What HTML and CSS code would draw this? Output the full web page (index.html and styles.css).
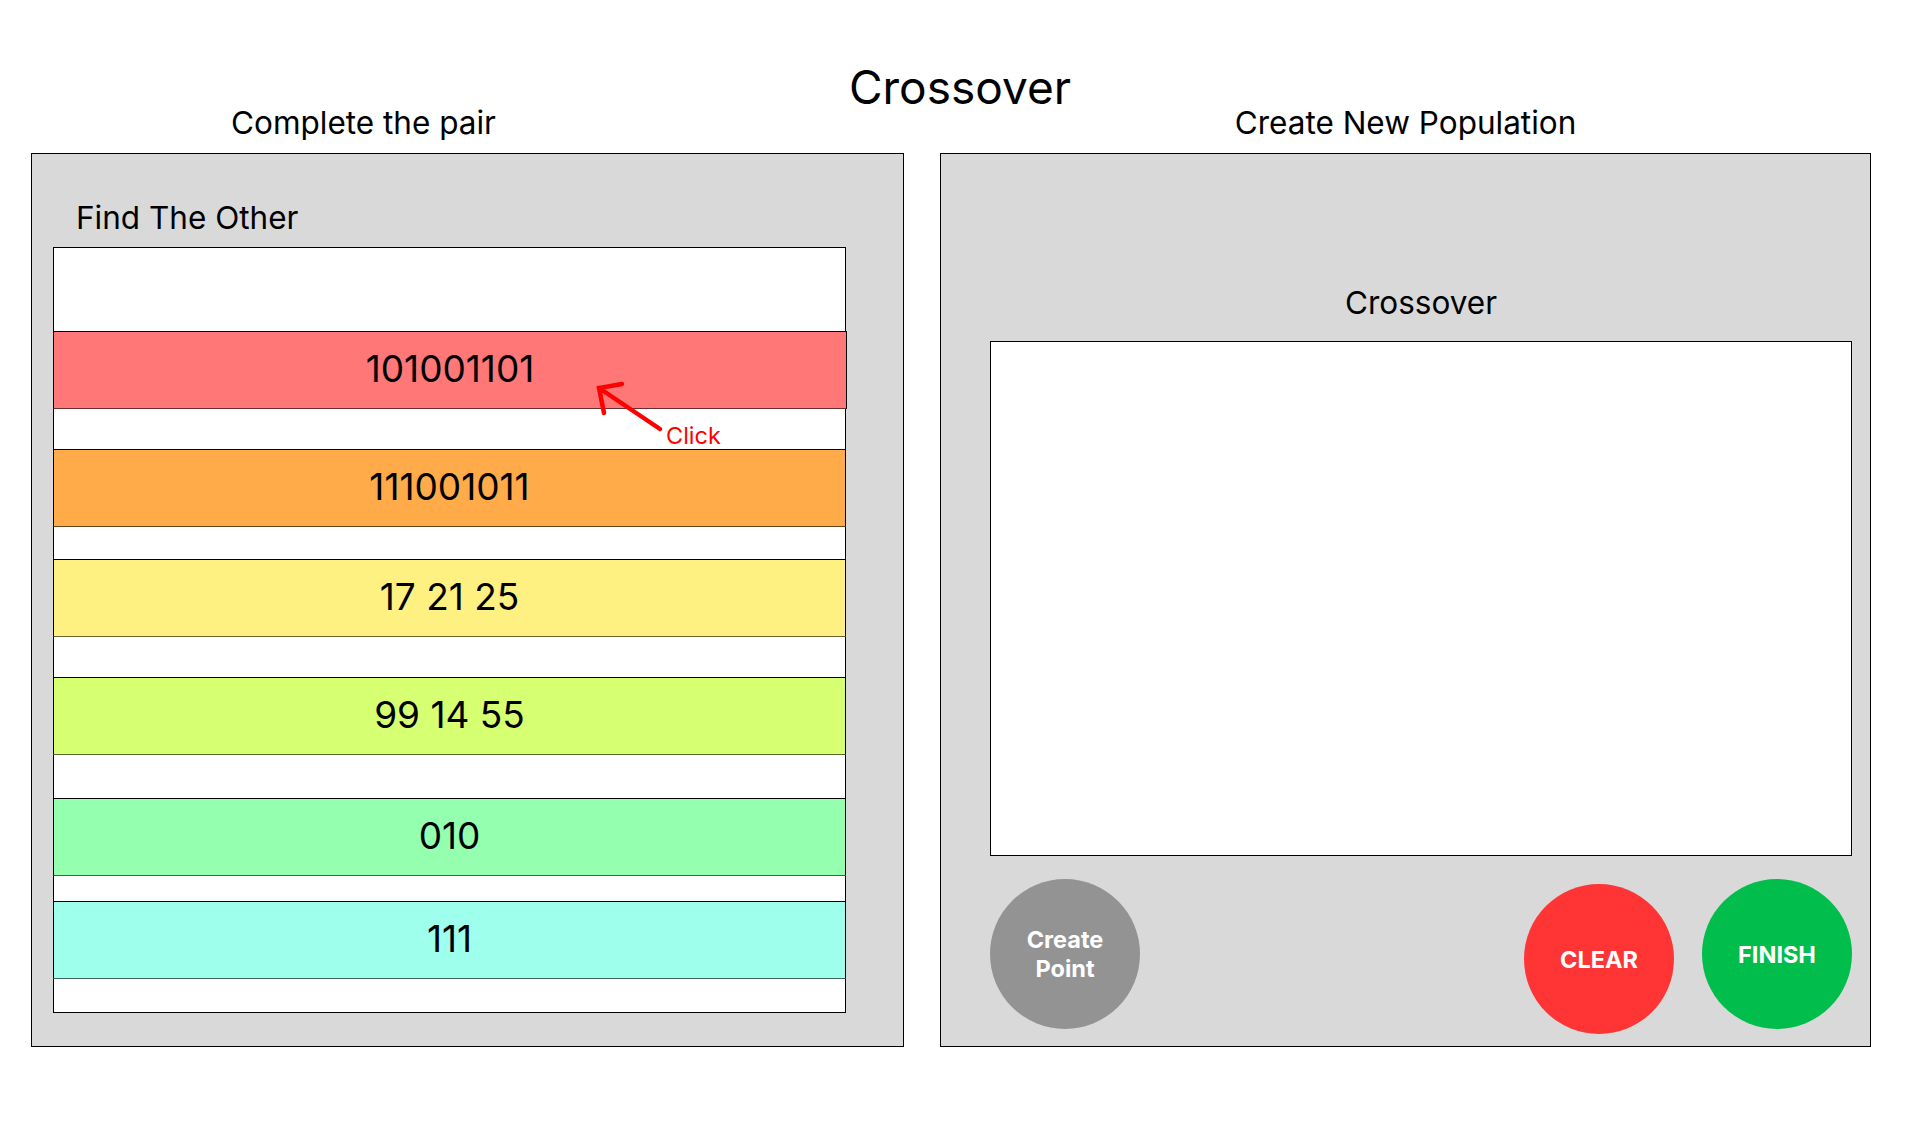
FILE: index.html
```html
<!DOCTYPE html>
<html lang="en">
<head>
<meta charset="utf-8">
<title>Crossover</title>
<link rel="stylesheet" href="styles.css">
</head>
<body>
<main class="page">
  <h1 class="page-title">Crossover</h1>
  <div class="columns">
    <section class="column">
      <h2 class="column-title column-title--left">Complete the pair</h2>
      <div class="panel panel--pairs">
        <h3 class="panel-heading">Find The Other</h3>
        <div class="list">
          <div class="row row--red"><span>101001101</span></div>
          <div class="row row--orange"><span>111001011</span></div>
          <div class="row row--yellow"><span>17 21 25</span></div>
          <div class="row row--lime"><span>99 14 55</span></div>
          <div class="row row--green"><span>010</span></div>
          <div class="row row--cyan"><span>111</span></div>
          <svg class="hint-arrow" width="80" height="57" viewBox="0 0 80 57" aria-hidden="true">
            <path d="M69 51 L8 10 M31 6 L8 10 L13 35" fill="none" stroke="#ff0000" stroke-width="4.5" stroke-linecap="round" stroke-linejoin="miter"/>
          </svg>
          <span class="hint-label">Click</span>
        </div>
      </div>
    </section>
    <section class="column">
      <h2 class="column-title column-title--center">Create New Population</h2>
      <div class="panel panel--create">
        <h3 class="panel-heading panel-heading--center">Crossover</h3>
        <div class="canvas"></div>
        <div class="actions">
          <button class="circle-btn circle-btn--gray" type="button">Create<br>Point</button>
          <div class="actions-right">
            <button class="circle-btn circle-btn--red" type="button">CLEAR</button>
            <button class="circle-btn circle-btn--green" type="button">FINISH</button>
          </div>
        </div>
      </div>
    </section>
  </div>
</main>
</body>
</html>
```

FILE: styles.css
```css
* { box-sizing: border-box; }
html, body { margin: 0; padding: 0; background: #ffffff; }
body {
  font-family: Inter, "Noto Sans", "Liberation Sans", sans-serif;
  color: #000;
  width: 1920px;
  height: 1134px;
  overflow: hidden;
}
.page { padding-top: 67px; }
.page-title {
  margin: 0;
  font-size: 46px;
  font-weight: 400;
  line-height: 40px;
  text-align: center;
}
.columns {
  display: grid;
  grid-template-columns: 873px 931px;
  column-gap: 36px;
  padding-left: 31px;
}
.column-title {
  margin: 1px 0 15px;
  font-size: 31.5px;
  font-weight: 400;
  line-height: 30px;
}
.column-title--left { padding-left: 200px; }
.column-title--center { text-align: center; }
.panel {
  height: 894px;
  background: #d9d9d9;
  border: 1px solid #000;
}
.panel--pairs { padding: 48px 0 0 21px; }
.panel--create { padding: 133px 18px 0 49px; }
.panel-heading {
  margin: 0;
  font-size: 31.5px;
  font-weight: 400;
  line-height: 32px;
}
.panel--pairs .panel-heading { margin: 0 0 13px 23px; }
.panel-heading--center { text-align: center; margin-bottom: 22px; }
.list {
  position: relative;
  width: 793px;
  height: 766px;
  background: #fff;
  border: 1px solid #000;
  padding-top: 83px;
}
.row {
  height: 78px;
  display: flex;
  align-items: center;
  justify-content: center;
  font-size: 37px;
  border-top: 1px solid #000;
  border-bottom: 1px solid rgba(0, 0, 0, 0.6);
  margin-left: -1px;
  margin-right: -1px;
  border-left: 1px solid #000;
  border-right: 1px solid #000;
}
.row span { transform: translateY(-2px); }
.row--red { background: #ff7777; margin-right: -2px; }
.row--orange { background: #ffab4a; margin-top: 40px; }
.row--yellow { background: #fff082; margin-top: 32px; }
.row--lime { background: #d6ff71; margin-top: 40px; }
.row--green { background: #94ffae; margin-top: 43px; }
.row--cyan { background: #9effec; margin-top: 25px; }
.hint-arrow {
  position: absolute;
  left: 537px;
  top: 130px;
}
.hint-label {
  position: absolute;
  left: 612px;
  top: 176px;
  font-size: 23.5px;
  line-height: 23px;
  color: #ff0000;
}
.canvas {
  height: 515px;
  background: #fff;
  border: 1px solid #000;
}
.actions {
  display: flex;
  justify-content: space-between;
  align-items: flex-start;
  margin-top: 23px;
}
.actions-right {
  display: flex;
  gap: 28px;
  align-items: flex-start;
}
.circle-btn {
  width: 150px;
  height: 150px;
  border-radius: 50%;
  border: 0;
  padding: 0;
  color: #fff;
  font-family: Inter, "Noto Sans", "Liberation Sans", sans-serif;
  font-size: 23.5px;
  font-weight: 700;
  line-height: 29px;
  display: flex;
  align-items: center;
  justify-content: center;
  text-align: center;
}
.circle-btn--gray { background: #939393; }
.circle-btn--red { background: #ff3535; margin-top: 5px; }
.circle-btn--green { background: #00bd4c; }
```
